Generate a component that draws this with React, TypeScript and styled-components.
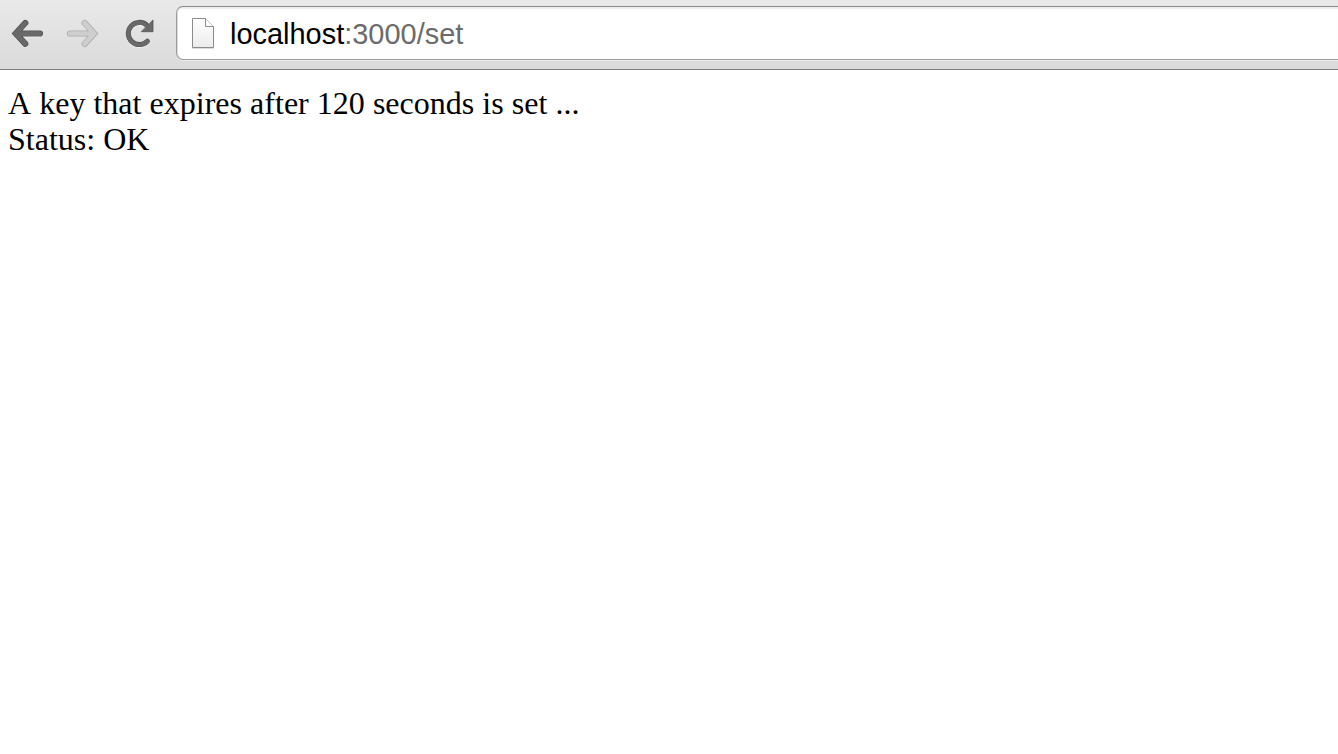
import React from "react";
import styled, { createGlobalStyle } from "styled-components";

const GlobalStyle = createGlobalStyle`
  body { margin: 0; background: #fff; }
`;

const Browser = styled.div`
  display: flex;
  flex-direction: column;
  height: 754px;
  overflow: hidden;
  background: #fff;
`;

const Toolbar = styled.header`
  box-sizing: border-box;
  display: flex;
  align-items: flex-start;
  height: 70px;
  padding-top: 6px;
  background: linear-gradient(#e9e9e9, #dadada);
  border-bottom: 1px solid #7d7d7d;
`;

const NavButtons = styled.nav`
  display: flex;
  width: 176px;
  flex: none;
`;

const NavButton = styled.button<{ $width: number }>`
  width: ${(p) => p.$width}px;
  height: 54px;
  padding: 0;
  border: 0;
  background: none;
  svg { display: block; }
`;

const AddressBar = styled.div`
  box-sizing: border-box;
  display: flex;
  flex: 1;
  align-items: flex-start;
  height: 54px;
  padding: 10px 0 0 14px;
  background: #fff;
  border: 1px solid #9b9b9b;
  border-top-color: #8c8c8c;
  border-right: 0;
  border-radius: 7px 0 0 7px;
  box-shadow: inset 0 2px 1px #efefef, inset 1px 0 0 #dcdcdc, 0 1px 0 #eeeeee;
  svg { flex: none; }
`;

const Url = styled.span`
  margin-left: 15px;
  padding-top: 1px;
  font: 28.95px/32px "Liberation Sans", Arial, sans-serif;
  color: #6b6b6b;
  white-space: nowrap;
`;

const Host = styled.span`
  color: #000;
`;

const Page = styled.main`
  padding: 15px 8px;
  font: 32px/36px "Liberation Serif", "Times New Roman", serif;
  font-kerning: none;
  color: #000;
`;

const Line = styled.div<{ $tracking?: number }>`
  letter-spacing: ${(p) => p.$tracking ?? 0}px;
  white-space: nowrap;
`;

export default function App() {
  return (
    <Browser>
      <GlobalStyle />
      <Toolbar>
        <NavButtons>
          <NavButton $width={56} aria-label="Back">
            <svg width="56" height="54" viewBox="0 6 56 54" fill="none" strokeLinecap="round">
              <path d="M25.3 24.2L16 34.5L25.3 44.6M17 34.5H40" stroke="#fff" strokeOpacity=".5" strokeWidth="6" />
              <path d="M25.3 23L15.8 33.5L25.3 43.8M17 33.5H40" stroke="#545454" strokeWidth="6.2" />
              <path d="M25.3 23.3L15.9 33.6L25.3 43.8M17 33.6H40" stroke="#696969" strokeWidth="4.8" />
            </svg>
          </NavButton>
          <NavButton $width={56} aria-label="Forward">
            <svg width="56" height="54" viewBox="56 6 56 54" fill="none" strokeLinecap="round">
              <path d="M84.7 23L94.2 33.5L84.7 43.8M93 33.5H70" stroke="#ababab" strokeWidth="6.2" />
              <path d="M84.7 23.1L94.1 33.5L84.7 43.7M93 33.5H70" stroke="#cecece" strokeWidth="4.7" />
            </svg>
          </NavButton>
          <NavButton $width={64} aria-label="Reload">
            <svg width="64" height="54" viewBox="112 6 64 54" fill="none" strokeLinecap="round">
              <path d="M147.4 42.2A11.1 11.1 0 1 1 146 25.8" stroke="#fff" strokeOpacity=".5" strokeWidth="4.8" />
              <path d="M147.4 41.2A11.1 11.1 0 1 1 146.6 25" stroke="#545454" strokeWidth="5" />
              <path d="M153 20.3V31.7H141.5Z" fill="#696969" stroke="#545454" strokeWidth=".8" />
              <path d="M147.4 41.3A11.1 11.1 0 1 1 146.6 25.3" stroke="#696969" strokeWidth="3.8" />
            </svg>
          </NavButton>
        </NavButtons>
        <AddressBar>
          <svg width="24" height="34" viewBox="191 17 24 34">
            <defs>
              <linearGradient id="paper" x1="0" y1="0" x2="0" y2="1">
                <stop offset="0" stopColor="#fff" />
                <stop offset="1" stopColor="#ececec" />
              </linearGradient>
            </defs>
            <path d="M192 48.5H214" stroke="#ddd" />
            <path d="M192.5 18.5H205.5L213.5 26.5V47.5H192.5Z" fill="url(#paper)" stroke="#8b8b8b" />
            <path d="M205.5 18.5V26.5H213.5" fill="#fff" stroke="#8b8b8b" />
          </svg>
          <Url><Host>localhost</Host>:3000/set</Url>
        </AddressBar>
      </Toolbar>
      <Page>
        <Line $tracking={0.02}>A key that expires after 120 seconds is set ...</Line>
        <Line>Status: OK</Line>
      </Page>
    </Browser>
  );
}
